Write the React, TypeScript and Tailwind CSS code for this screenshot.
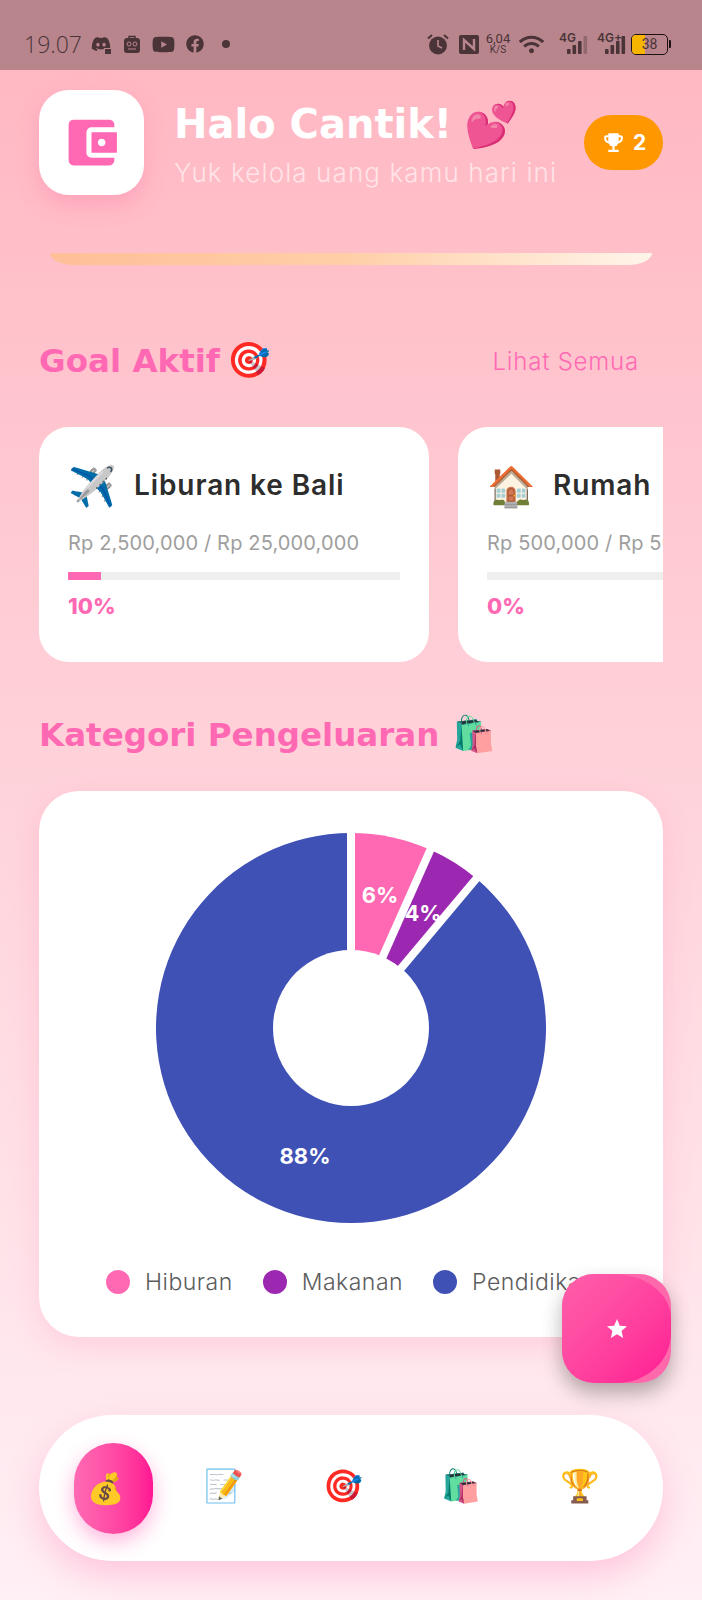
import { MdAccountBalanceWallet, MdEmojiEvents, MdStar } from "react-icons/md";
import { FaDiscord, FaYoutube, FaFacebook, FaWifi } from "react-icons/fa";

const heading = "font-['DejaVu_Sans',sans-serif] font-bold";

function polar(r: number, deg: number) {
  const a = (deg * Math.PI) / 180;
  return [200 + r * Math.sin(a), 200 - r * Math.cos(a)];
}

function sector(from: number, to: number) {
  const [x1, y1] = polar(195, from);
  const [x2, y2] = polar(195, to);
  const large = to - from > 180 ? 1 : 0;
  return `M200 200 L${x1} ${y1} A195 195 0 ${large} 1 ${x2} ${y2} Z`;
}

function Donut() {
  const cuts = [0, 24, 40];
  return (
    <svg width="400" height="400" viewBox="0 0 400 400">
      <path d={sector(0, 24)} fill="#ff69b4" />
      <path d={sector(24, 40)} fill="#9c27b0" />
      <path d={sector(40, 360)} fill="#3f51b5" />
      {cuts.map((c) => {
        const [x, y] = polar(200, c);
        return <line key={c} x1="200" y1="200" x2={x} y2={y} stroke="white" strokeWidth="8" />;
      })}
      <circle cx="200" cy="200" r="78" fill="white" />
      <text x="229" y="75" textAnchor="middle" fill="white" fontSize="22" fontWeight="700" fontFamily="Inter">6%</text>
      <text x="272" y="93" textAnchor="middle" fill="white" fontSize="22" fontWeight="700" fontFamily="Inter">4%</text>
      <text x="154" y="336" textAnchor="middle" fill="white" fontSize="22" fontWeight="700" fontFamily="Inter">88%</text>
    </svg>
  );
}

// status bar drawings
function Signal({ full }: { full: boolean }) {
  const heights = [5, 9, 13, 18];
  return (
    <svg width="22" height="18" viewBox="0 0 22 18" fill="#4a3438">
      {heights.map((h, i) => (
        <rect key={h} x={i * 5.5} y={18 - h} width="3.6" height={h} rx="0.8" opacity={!full && i === 3 ? 0.35 : 1} />
      ))}
    </svg>
  );
}

function Network({ label, full }: { label: string; full: boolean }) {
  return (
    <div className="relative w-[30px] h-[20px]">
      <span className="absolute left-0 top-[-3px] text-[12px] leading-[14px] font-semibold whitespace-nowrap">{label}</span>
      <div className="absolute right-0 bottom-0"><Signal full={full} /></div>
    </div>
  );
}

function AlarmIcon() {
  return (
    <svg width="22" height="22" viewBox="0 0 22 22">
      <circle cx="11" cy="12.5" r="9" fill="#4a3438" />
      <path d="M11 7v6l4 2" stroke="#b9858d" strokeWidth="1.6" fill="none" />
      <path d="M1 5.5 5 2M21 5.5 17 2" stroke="#4a3438" strokeWidth="2" />
    </svg>
  );
}

function NfcIcon() {
  return (
    <svg width="20" height="19" viewBox="0 0 20 19">
      <rect width="20" height="19" rx="2" fill="#4a3438" />
      <path d="M5 15V5l10 9V4" stroke="#b9858d" strokeWidth="2.4" fill="none" />
    </svg>
  );
}

function BotIcon() {
  return (
    <svg width="16" height="18" viewBox="0 0 16 18">
      <rect y="3" width="16" height="15" rx="3" fill="#4a3438" />
      <path d="M5 4V1.5h6V4" stroke="#4a3438" strokeWidth="1.5" fill="none" />
      <circle cx="5" cy="9" r="2" fill="none" stroke="#b9858d" />
      <circle cx="11" cy="9" r="2" fill="none" stroke="#b9858d" />
      <path d="M4 14h8" stroke="#b9858d" />
    </svg>
  );
}

function StatusBar() {
  return (
    <div className="h-[70px] bg-[#b9858d] flex items-center pt-[18px] pl-[24px] pr-[31px] text-[#4a3438]">
      <span className="text-[23px] font-light font-['Open_Sans',sans-serif] w-[67px]">19.07</span>
      <div className="flex items-center">
        <div className="relative w-[20px] h-[20px]">
          <FaDiscord className="text-[20px]" />
          <span className="absolute right-[-1px] bottom-[-1px] w-[8px] h-[7px] bg-[#4a3438] border border-[#b9858d]" />
        </div>
        <div className="ml-[13px]"><BotIcon /></div>
        <FaYoutube className="ml-[12px] text-[23px]" />
        <FaFacebook className="ml-[11px] text-[18px]" />
        <span className="ml-[18px] w-[8px] h-[8px] rounded-full bg-[#4a3438]" />
      </div>
      <div className="ml-auto flex items-center">
        <AlarmIcon />
        <div className="ml-[10px]"><NfcIcon /></div>
        <span className="ml-[6px] w-[26px] text-center leading-[11px] font-['Roboto',sans-serif]">
          <span className="block text-[13px]">6,04</span>
          <span className="block text-[10px]">K/S</span>
        </span>
        <FaWifi className="ml-[8px] text-[25px]" />
        <div className="ml-[15px]"><Network label="4G" full={false} /></div>
        <div className="ml-[8px]"><Network label="4G+" full={true} /></div>
        <div className="relative ml-[4px] w-[37px] h-[21px] rounded-[5px] border-[1.5px] border-[#1c1214] overflow-hidden">
          <div className="h-full w-[13px] bg-[#f7b500]" />
          <span className="absolute inset-0 text-[14px] leading-[18px] text-center font-['Roboto',sans-serif]">38</span>
        </div>
        <span className="ml-[1px] w-[2px] h-[8px] rounded-r-[1px] bg-[#1c1214]" />
      </div>
    </div>
  );
}

function GoalCard({ emoji, title, amount, pct, bar, className }: { emoji: string; title: string; amount: string; pct: string; bar: number; className: string }) {
  return (
    <div className={`bg-white rounded-[30px] h-[235px] pt-[33px] pl-[29px] shrink-0 overflow-hidden ${className}`}>
      <div className="flex items-center gap-[17px] h-[50px] whitespace-nowrap">
        <span className="text-[39px] leading-none">{emoji}</span>
        <span className="text-[28px] font-semibold tracking-[0.9px] text-[#2d2d2d]">{title}</span>
      </div>
      <div className="mt-[18px] text-[20px] tracking-[0.15px] text-[#9e9e9e] whitespace-nowrap">{amount}</div>
      <div className="mt-[14px] w-[332px] h-[8px] bg-[#eeeeee]">
        <div className="h-full bg-[#ff69b4]" style={{ width: `${bar}%` }} />
      </div>
      <div className="mt-[10px] text-[22px] font-extrabold text-[#ff69b4]">{pct}</div>
    </div>
  );
}

function LegendItem({ color, label }: { color: string; label: string }) {
  return (
    <span className="flex items-center gap-[15px]">
      <span className={`w-[24px] h-[24px] rounded-full ${color}`} />
      {label}
    </span>
  );
}

export default function App() {
  return (
    <div className="relative w-[702px] h-[1600px] overflow-hidden bg-gradient-to-b from-[#ffb6c1] to-[#fff0f5] font-['Inter','Noto_Sans',sans-serif]">
      <StatusBar />
      <div className="px-[39px]">
        <div className="flex items-center mt-[20px]">
          <div className="w-[105px] h-[105px] rounded-[30px] bg-white flex items-center justify-center shadow-[0_10px_22px_rgba(255,105,160,0.3)]">
            <MdAccountBalanceWallet className="text-[61px] text-[#ff69b4]" />
          </div>
          <div className="ml-[30px]">
            <div className={`flex items-center h-[56px] text-[40px] text-white whitespace-nowrap ${heading}`}>
              Halo Cantik!<span className="ml-[12px] mt-[1px] text-[44px] leading-none">💕</span>
            </div>
            <div className="mt-[5px] text-[26px] leading-[32px] font-light tracking-[1.1px] text-white/60 whitespace-nowrap">Yuk kelola uang kamu hari ini</div>
          </div>
          <div className="ml-auto flex items-center justify-center gap-[7px] w-[79px] h-[55px] rounded-full bg-[#ff9800] text-white font-bold text-[21px]">
            <MdEmojiEvents className="text-[25px]" />2
          </div>
        </div>
        <div className="mt-[58px] mx-[11px] h-[12px] rounded-b-[24px_12px] bg-gradient-to-r from-[#ffbf98] via-[#ffcfa8] to-[#fff5ea]" />
        <div className="mt-[70px] h-[50px] flex items-center justify-between">
          <span className={`text-[32.5px] text-[#ff69b4] ${heading}`}>
            Goal Aktif<span className="ml-[7px] text-[35px]">🎯</span>
          </span>
          <span className="mr-[24px] mt-[4px] text-[24px] font-light tracking-[0.8px] text-[#ff69b4]">Lihat Semua</span>
        </div>
        <div className="mt-[42px] flex gap-[29px] overflow-hidden">
          <GoalCard emoji="✈️" title="Liburan ke Bali" amount="Rp 2,500,000 / Rp 25,000,000" pct="10%" bar={10} className="w-[390px]" />
          <GoalCard emoji="🏠" title="Rumah" amount="Rp 500,000 / Rp 50,000,000" pct="0%" bar={0} className="w-[390px]" />
        </div>
        <div className={`mt-[48px] h-[48px] leading-[48px] text-[32.5px] text-[#ff69b4] ${heading}`}>
          Kategori Pengeluaran<span className="ml-[13px] text-[35px]">🛍️</span>
        </div>
        <div className="mt-[33px] h-[546px] rounded-[40px] bg-white overflow-hidden shadow-[0_10px_30px_rgba(255,105,160,0.18)] flex flex-col items-center">
          <div className="mt-[37px] shrink-0"><Donut /></div>
          <div className="mt-[37px] w-full pl-[67px] flex items-center gap-[30px] whitespace-nowrap text-[23px] font-light tracking-[0.5px] text-[#5c5c5c]">
            <LegendItem color="bg-[#ff69b4]" label="Hiburan" />
            <LegendItem color="bg-[#9c27b0]" label="Makanan" />
            <LegendItem color="bg-[#3f51b5]" label="Pendidikan" />
          </div>
        </div>
        <div className="mt-[78px] h-[146px] rounded-[73px] bg-white flex items-center pl-[35px] pr-[24px] shadow-[0_15px_35px_rgba(255,105,170,0.3)]">
          <div className="mr-[12px] w-[79px] h-[91px] shrink-0 rounded-full bg-gradient-to-r from-[#ff69b4] to-[#ff1493] flex items-center justify-center pr-[17px] text-[30px] shadow-[0_8px_20px_rgba(255,20,147,0.3)]">💰</div>
          {["📝", "🎯", "🛍️", "🏆"].map((e) => (
            <span key={e} className="flex-1 pb-[4px] text-center text-[32px]">{e}</span>
          ))}
        </div>
      </div>
      <div className="absolute left-[562px] top-[1274px] w-[109px] h-[109px] rounded-[32px] bg-[#ff69ac] overflow-hidden shadow-[0_10px_20px_rgba(0,0,0,0.3)]">
        <div className="w-full h-full rounded-[32px_58px_54px_32px/32px_44px_50px_32px] bg-gradient-to-br from-[#ff5fab] to-[#ff1493] flex items-center justify-center text-white">
          <MdStar className="text-[24px]" />
        </div>
      </div>
    </div>
  );
}
